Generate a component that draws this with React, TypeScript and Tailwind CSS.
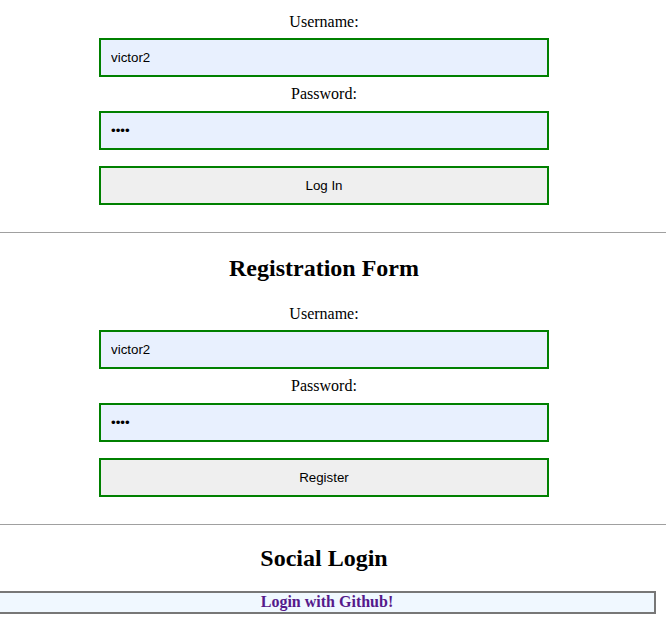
import React from 'react';

const serif = "font-['Liberation_Serif','Times_New_Roman',serif]";
const sans = "font-['Liberation_Sans',Arial,sans-serif]";

function Field({ label, type, value, labelGap, inputGap }: { label: string; type: string; value: string; labelGap: string; inputGap: string }) {
  return (
    <>
      <label className={`block text-center text-[16px] leading-[18px] text-black ${serif} ${labelGap}`}>
        {label}
      </label>
      <input
        type={type}
        value={value}
        readOnly
        className={`${inputGap} block h-[39px] w-[450px] border-2 border-[#008000] bg-[#e8f0fe] px-[10px] text-[13.33px] text-black outline-none ${sans}`}
      />
    </>
  );
}

function AuthForm({ button, pwLabelGap, pwInputGap }: { button: string; pwLabelGap: string; pwInputGap: string }) {
  return (
    <form className="mx-auto w-[450px]" onSubmit={(e) => e.preventDefault()}>
      <Field label="Username:" type="text" value="victor2" labelGap="" inputGap="mt-[7px]" />
      <Field label="Password:" type="password" value="1234" labelGap={pwLabelGap} inputGap={pwInputGap} />
      <button
        type="submit"
        className={`mt-[16px] block h-[39px] w-[450px] border-2 border-[#008000] bg-[#efefef] text-[13.33px] text-black ${sans}`}
      >
        {button}
      </button>
    </form>
  );
}

export default function App() {
  return (
    <div className={`w-[666px] bg-white pt-[13px] ${serif}`}>
      <div className="w-[648px]">
        <AuthForm button="Log In" pwLabelGap="mt-[8px]" pwInputGap="mt-[8px]" />
      </div>
      <hr className="mt-[27px] border-0 border-t border-[#a0a0a0]" />
      <div className="w-[648px]">
        <h2 className="mt-[21px] text-center text-[24px] font-bold leading-[28px] text-black">Registration Form</h2>
        <div className="mt-[23px]">
          <AuthForm button="Register" pwLabelGap="mt-[8px]" pwInputGap="mt-[8px]" />
        </div>
      </div>
      <hr className="mt-[27px] border-0 border-t border-[#a0a0a0]" />
      <h2 className="mt-[19px] w-[648px] text-center text-[24px] font-bold leading-[28px] text-black">Social Login</h2>
      <a
        href="#"
        className="mt-[19px] -ml-[2px] block h-[23px] w-[658px] border-2 border-[#777777] bg-[#f0f8ff] text-center text-[16px] font-bold leading-[18px] text-[#551a8b] no-underline"
      >
        Login with Github!
      </a>
    </div>
  );
}
